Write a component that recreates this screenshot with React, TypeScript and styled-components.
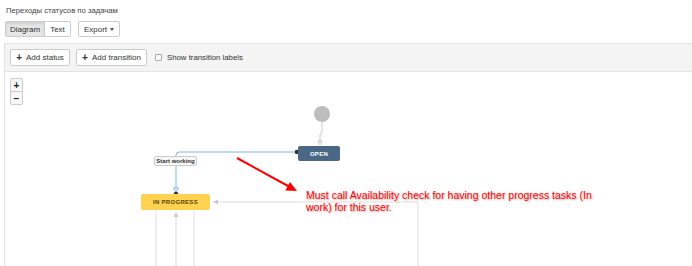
import React from 'react';
import styled, { createGlobalStyle } from 'styled-components';

const GlobalStyle = createGlobalStyle`
    html, body {
        margin: 0;
        padding: 0;
        background: #fff;
    }
    body {
        font-family: "Liberation Sans", Arial, sans-serif;
        color: #333;
    }
`;

const Page = styled.div`
    width: 692px;
    height: 266px;
    overflow: hidden;
    display: flex;
    flex-direction: column;
`;

const Title = styled.div`
    font-size: 7.7px;
    line-height: 12px;
    color: #444;
    padding: 5px 0 0 6px;
`;

const ButtonRow = styled.div`
    display: flex;
    gap: 7px;
    margin-top: 4px;
    padding-left: 5px;
`;

const BtnGroup = styled.div`
    display: flex;
`;

const Btn = styled.button<{ $active?: boolean; $w: number }>`
    box-sizing: border-box;
    width: ${p => p.$w}px;
    height: 16px;
    padding: 0;
    font-family: inherit;
    font-size: 8px;
    white-space: nowrap;
    color: #333;
    border: 1px solid #ccc;
    background: ${p => (p.$active ? '#e6e6e6' : '#fff')};
    box-shadow: ${p => (p.$active ? 'inset 0 2px 3px rgba(0,0,0,0.1)' : 'none')};
    border-radius: 2px;
    & + & {
        margin-left: -1px;
    }
`;

const GroupBtn = styled(Btn)<{ $pos: 'first' | 'last' }>`
    border-radius: ${p => (p.$pos === 'first' ? '2px 0 0 2px' : '0 2px 2px 0')};
`;

const Caret = styled.span`
    display: inline-block;
    margin-left: 3px;
    vertical-align: middle;
    border-top: 3px solid #555;
    border-left: 2.5px solid transparent;
    border-right: 2.5px solid transparent;
`;

const Panel = styled.div`
    flex: 1;
    margin: 6px 0 0 4px;
    border: 1px solid #e4e4e4;
    border-right: none;
    border-bottom: none;
    display: flex;
    flex-direction: column;
`;

const Toolbar = styled.div`
    height: 27px;
    background: #f4f4f4;
    border-bottom: 1px solid #e4e4e4;
    display: flex;
    align-items: center;
    padding-left: 5px;
    gap: 6px;
`;

const ToolBtn = styled.button<{ $w: number }>`
    box-sizing: border-box;
    width: ${p => p.$w}px;
    height: 17px;
    padding: 0;
    display: flex;
    align-items: center;
    justify-content: center;
    gap: 4px;
    font-family: inherit;
    font-size: 8px;
    white-space: nowrap;
    color: #333;
    background: #fff;
    border: 1px solid #ccc;
    border-radius: 2px;
`;

const Plus = styled.span`
    font-weight: bold;
    font-size: 10px;
    line-height: 8px;
    color: #333;
`;

const CheckLabel = styled.label`
    display: flex;
    align-items: center;
    gap: 5px;
    margin-left: 2px;
    font-size: 7.8px;
    white-space: nowrap;
    color: #333;
`;

const CheckBox = styled.span`
    box-sizing: border-box;
    width: 7px;
    height: 7px;
    border: 1px solid #aaa;
    border-radius: 1px;
    background: #fafafa;
`;

const Canvas = styled.div`
    flex: 1;
    position: relative;
    background: #fff;
`;

const Zoom = styled.div`
    position: absolute;
    left: 5px;
    top: 6px;
    display: flex;
    flex-direction: column;
    border: 1px solid #ccc;
    border-radius: 2px;
    background: #f7f7f7;
`;

const ZoomBtn = styled.div`
    width: 11px;
    height: 12px;
    display: flex;
    align-items: center;
    justify-content: center;
    font-size: 10px;
    font-weight: bold;
    color: #222;
    & + & {
        border-top: 1px solid #ccc;
    }
`;

const Lines = styled.svg`
    position: absolute;
    left: 0;
    top: 0;
`;

const Node = styled.div<{ $x: number; $y: number; $w: number; $h: number; $bg: string; $fg: string }>`
    position: absolute;
    left: ${p => p.$x}px;
    top: ${p => p.$y}px;
    width: ${p => p.$w}px;
    height: ${p => p.$h}px;
    background: ${p => p.$bg};
    color: ${p => p.$fg};
    border-radius: 2px;
    display: flex;
    align-items: center;
    justify-content: center;
    font-size: 6px;
    font-weight: bold;
    letter-spacing: 0.3px;
    white-space: nowrap;
`;

const EdgeLabel = styled.div`
    position: absolute;
    left: 149px;
    top: 84px;
    box-sizing: border-box;
    width: 43px;
    height: 10px;
    border: 1px solid #ccc;
    border-radius: 2px;
    background: #f7f7f7;
    font-size: 6px;
    font-weight: bold;
    line-height: 8px;
    color: #333;
    text-align: center;
    white-space: nowrap;
`;

const Note = styled.div`
    position: absolute;
    left: 301px;
    top: 117px;
    font-size: 10.5px;
    line-height: 12px;
    color: #ff0000;
    white-space: nowrap;
    text-shadow: 1px 1px 2px rgba(0, 0, 0, 0.35);
`;

const Diagram: React.FC = () => (
    <Canvas>
        <Zoom>
            <ZoomBtn>+</ZoomBtn>
            <ZoomBtn>−</ZoomBtn>
        </Zoom>
        <Lines width="687" height="194">
            <circle cx="317" cy="42" r="8" fill="#bdbdbd" />
            <path d="M317 50 V60 L315 63 V70" stroke="#c8c8c8" fill="none" />
            <polygon points="313,69 317,69 315,73" fill="none" stroke="#c8c8c8" />

            <path d="M292 80 H174 Q171 80 171 83 V121" stroke="#7db4ea" fill="none" />
            <polygon points="168.5,116 173.5,116 171,120" fill="#fff" stroke="#7db4ea" />
            <circle cx="292" cy="80" r="2.3" fill="#333" />
            <circle cx="171" cy="122" r="2.3" fill="#333" />

            <path d="M208 130 H413 V194" stroke="#dcdcdc" fill="none" />
            <polygon points="208,130 213,127.5 213,132.5" fill="#ccc" />

            <path d="M151 139 V194" stroke="#dcdcdc" />
            <path d="M171 141 V194" stroke="#dcdcdc" />
            <polygon points="171,140 168.5,145 173.5,145" fill="#ccc" />
            <path d="M189 139 V194" stroke="#dcdcdc" />

            <line x1="232" y1="86" x2="284" y2="114.5" stroke="#ff0000" strokeWidth="2" />
            <polygon points="292,119 280.3,118.6 285.0,110.1" fill="#ff0000" />
        </Lines>
        <Node $x={293} $y={74} $w={42} $h={15} $bg="#4a6785" $fg="#fff">OPEN</Node>
        <Node $x={136} $y={122} $w={69} $h={16} $bg="#ffd351" $fg="#594300">IN PROGRESS</Node>
        <EdgeLabel>Start working</EdgeLabel>
        <Note>
            Must call Availability check for having other progress tasks (In
            <br />
            work) for this user.
        </Note>
    </Canvas>
);

const App: React.FC = () => {
    return (
        <Page>
            <GlobalStyle />
            <Title>Переходы статусов по задачам</Title>
            <ButtonRow>
                <BtnGroup>
                    <GroupBtn $active $w={40} $pos="first">Diagram</GroupBtn>
                    <GroupBtn $w={27} $pos="last">Text</GroupBtn>
                </BtnGroup>
                <Btn $w={42}>
                    Export<Caret />
                </Btn>
            </ButtonRow>
            <Panel>
                <Toolbar>
                    <ToolBtn $w={60}><Plus>+</Plus>Add status</ToolBtn>
                    <ToolBtn $w={71}><Plus>+</Plus>Add transition</ToolBtn>
                    <CheckLabel>
                        <CheckBox />
                        Show transition labels
                    </CheckLabel>
                </Toolbar>
                <Diagram />
            </Panel>
        </Page>
    );
}

export default App
